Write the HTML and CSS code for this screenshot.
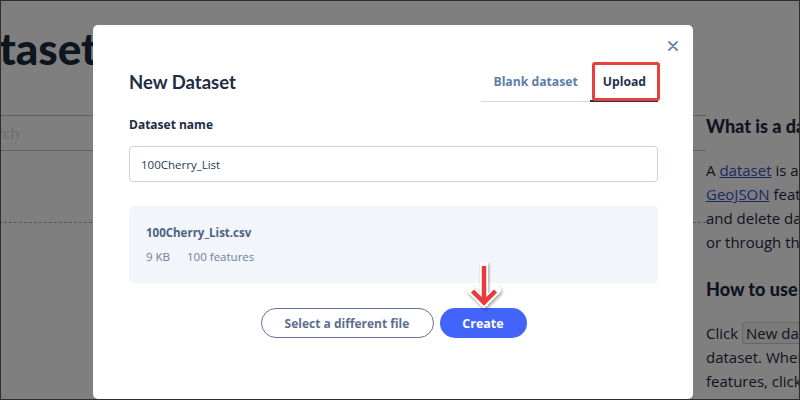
FILE: index.html
```html
<!DOCTYPE html>
<html lang="en">
<head>
  <meta charset="UTF-8" />
  <meta name="viewport" content="width=device-width, initial-scale=1.0"/>
  <title>Datasets</title>
  <link rel="stylesheet" href="styles.css">
</head>
<body>
  <div class="frame">
    <div class="page">
      <main class="main">
        <h1 class="page-title">Datasets</h1>
        <div class="search">Search</div>
        <div class="list-divider"></div>
      </main>
      <aside class="aside">
        <h2>What is a dataset?</h2>
        <p>A <a href="#">dataset</a> is an editable<br>
          <a href="#">GeoJSON</a> feature collection. Add, edit<br>
          and delete data in the dataset editor<br>
          or through the Datasets API.</p>
        <h2>How to use datasets</h2>
        <p>Click <code>New dataset</code> to create a new<br>
          dataset. When you're done adding<br>
          features, click export to create a<br>
          tileset.</p>
      </aside>
    </div>

    <div class="overlay"></div>

    <div class="modal">
      <button class="close" aria-label="Close">
        <svg width="10" height="10" viewBox="0 0 10 10">
          <path d="M1 1 L9 9 M9 1 L1 9" stroke="#6a85a6" stroke-width="1.8" stroke-linecap="round"/>
        </svg>
      </button>

      <div class="modal-header">
        <h3 class="modal-title">New Dataset</h3>
        <div class="tabs">
          <button class="tab">Blank dataset</button>
          <button class="tab tab-active">Upload</button>
        </div>
      </div>

      <label class="field-label" for="name">Dataset name</label>
      <input class="field-input" id="name" type="text" value="100Cherry_List">

      <div class="file-card">
        <div class="file-name">100Cherry_List.csv</div>
        <div class="file-meta">
          <span>9 KB</span>
          <span>100 features</span>
        </div>
      </div>

      <div class="actions">
        <button class="btn btn-outline">Select a different file</button>
        <button class="btn btn-primary">Create</button>
      </div>

      <!-- annotation arrow pointing at Create -->
      <svg class="pointer" width="34" height="46" viewBox="0 0 34 46">
        <path d="M17 3 V40 M4 28 L17 41 L30 28" fill="none" stroke="#fff" stroke-width="8" stroke-linejoin="miter" stroke-linecap="square"/>
        <path d="M17 4 V39 M5.5 29 L17 40.5 L28.5 29" fill="none" stroke="#ec3a3c" stroke-width="4.5" stroke-linejoin="miter" stroke-linecap="butt"/>
      </svg>
    </div>
  </div>
</body>
</html>
```

FILE: styles.css
```css
* {
  box-sizing: border-box;
}

body {
  margin: 0;
  padding: 0;
  font-family: 'Open Sans', sans-serif;
  background: #fff;
  overflow: hidden;
}

.frame {
  position: relative;
  width: 800px;
  height: 400px;
  border: 1px solid #2e2e2e;
  overflow: hidden;
}

/* page behind the dialog */
.page {
  display: flex;
  height: 100%;
  color: #1b2a3f;
}

.main {
  flex: none;
  width: 762px;
  margin-left: -57px;
}

.page-title {
  margin: 21px 0 0;
  font-family: 'Lato', sans-serif;
  font-weight: 900;
  font-size: 44px;
  line-height: 52px;
  color: #1b2a3f;
}

.search {
  margin-top: 41px;
  height: 36px;
  line-height: 34px;
  padding-left: 28px;
  border-top: 1px solid #b9c4d4;
  border-bottom: 1px solid #b9c4d4;
  font-size: 15px;
  color: #d2d6dc;
}

.list-divider {
  margin-top: 71px;
  border-bottom: 1px dashed #a9b1bd;
}

.aside {
  flex: none;
  width: 320px;
}

.aside h2 {
  margin: 113px 0 20px;
  font-family: 'Lato', sans-serif;
  font-weight: 900;
  font-size: 18px;
  line-height: 24px;
  white-space: nowrap;
}

.aside h2 + p + h2 {
  margin-top: 23px;
}

.aside p {
  margin: 0;
  font-size: 15px;
  line-height: 24px;
  white-space: nowrap;
}

.aside a {
  color: #3b52c4;
}

.aside code {
  font-family: 'Open Sans', sans-serif;
  padding: 0 3px;
  border: 1px solid #c9ced6;
  border-radius: 3px;
  background: #f4f5f7;
}

.overlay {
  position: absolute;
  inset: 0;
  background: rgba(0, 0, 0, 0.5);
}

/* dialog */
.modal {
  position: absolute;
  left: 92px;
  top: 24px;
  width: 600px;
  height: 374px;
  padding: 37px 35px 0 36px;
  background: #fff;
  border-radius: 5px;
}

.close {
  position: absolute;
  top: 16px;
  right: 15px;
  width: 10px;
  height: 10px;
  padding: 0;
  border: none;
  background: none;
  display: flex;
}

.modal-header {
  display: flex;
  justify-content: space-between;
  align-items: center;
  height: 40px;
}

.modal-title {
  margin: 0;
  font-family: 'Lato', sans-serif;
  font-weight: 700;
  font-size: 18.5px;
  color: #1e2c47;
}

.tabs {
  display: flex;
  height: 40px;
  border-bottom: 1px solid #d3dae4;
}

.tab {
  position: relative;
  padding: 0 12px;
  border: none;
  background: none;
  font-family: 'Open Sans', sans-serif;
  font-weight: 700;
  font-size: 12.2px;
  color: #5d7ea6;
}

.tab-active {
  padding: 0 12px 0 13px;
  color: #22324e;
  border-bottom: 2px solid #22324e;
  margin-bottom: -1px;
}

/* red highlight box from the tutorial annotation */
.tab-active::after {
  content: '';
  position: absolute;
  left: 2px;
  right: -2px;
  top: 0;
  bottom: -1px;
  border: 3px solid #e8403f;
  border-radius: 3px;
}

.field-label {
  display: block;
  margin-top: 13px;
  font-weight: 700;
  font-size: 12px;
  line-height: 20px;
  color: #1e2c47;
}

.field-input {
  display: block;
  width: 100%;
  height: 36px;
  margin-top: 11px;
  padding: 0 11px;
  border: 1px solid #c9d2de;
  border-radius: 4px;
  font-family: 'Open Sans', sans-serif;
  font-size: 11.5px;
  color: #273a55;
}

.file-card {
  margin-top: 24px;
  height: 77px;
  padding: 17px 17px 0;
  background: #f2f5fa;
  border-radius: 4px;
}

.file-name {
  font-weight: 700;
  font-size: 11.5px;
  line-height: 20px;
  color: #4a6385;
}

.file-meta {
  display: flex;
  gap: 17px;
  margin-top: 4px;
  font-size: 11.5px;
  line-height: 20px;
  color: #6c7f99;
}

.actions {
  display: flex;
  justify-content: center;
  gap: 6px;
  margin-top: 25px;
}

.btn {
  height: 30px;
  border-radius: 15px;
  font-family: 'Open Sans', sans-serif;
  font-weight: 700;
  font-size: 12px;
}

.btn-outline {
  width: 173px;
  border: 1px solid #5f7594;
  background: #fff;
  color: #5a6f8d;
}

.btn-primary {
  width: 87px;
  border: none;
  background: #4264fb;
  color: #fff;
  font-size: 12.5px;
}

.pointer {
  position: absolute;
  left: 374px;
  top: 237px;
  filter: drop-shadow(1px 2px 1.5px rgba(0, 0, 0, 0.35));
}
```
